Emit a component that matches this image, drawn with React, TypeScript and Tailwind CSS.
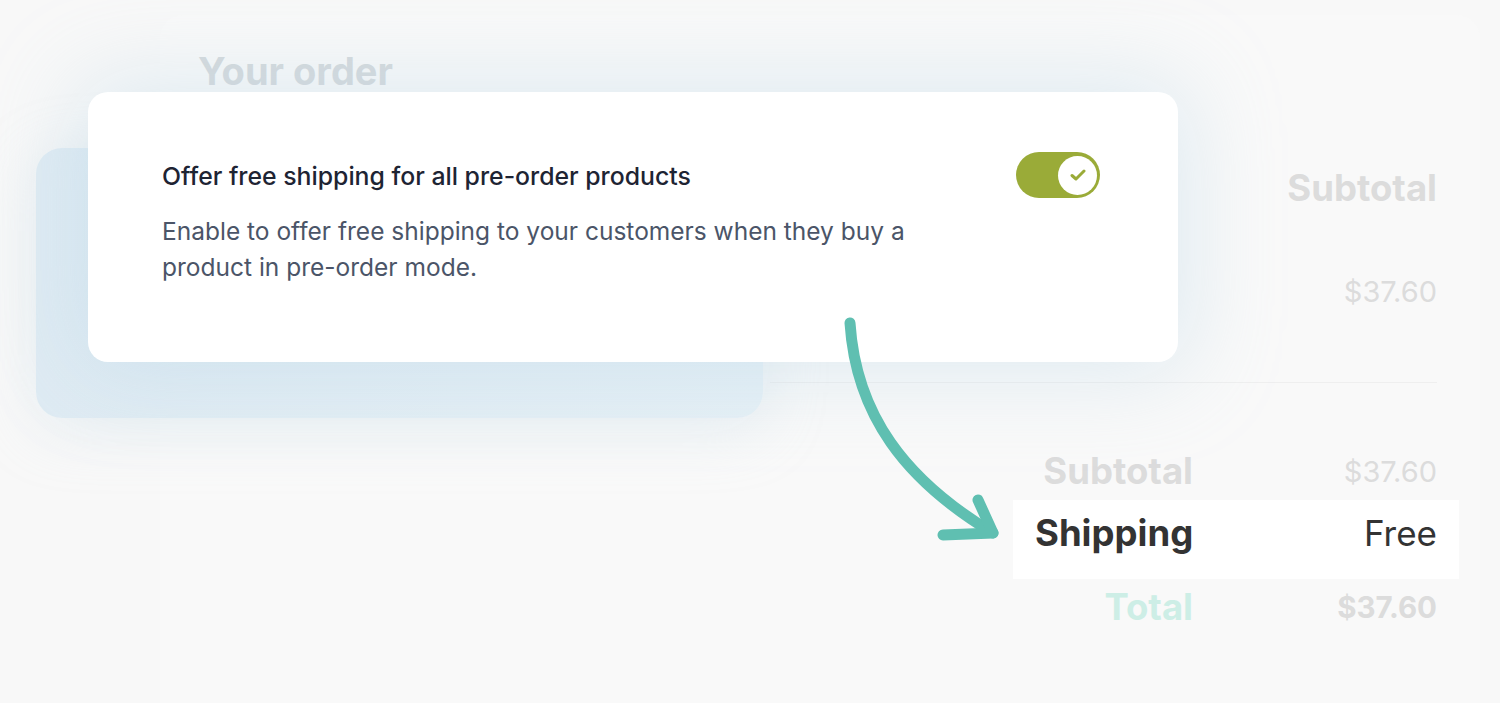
import React from "react";

function Toggle() {
  return (
    <div className="flex h-[46px] w-[84px] shrink-0 items-center justify-end rounded-full bg-[#9aab38] pr-[3px]">
      <div className="flex h-[39px] w-[39px] items-center justify-center rounded-full bg-white">
        <svg width="16" height="12" viewBox="0 0 16 12" fill="none">
          <path d="M2 6.5 L6 10 L14 2" stroke="#9aab38" strokeWidth="3" strokeLinecap="round" strokeLinejoin="round" />
        </svg>
      </div>
    </div>
  );
}

function Row({ label, value, labelClass, valueClass, boxed }: { label: string; value: string; labelClass: string; valueClass: string; boxed?: boolean }) {
  return (
    <div className={`flex items-center px-[22px] ${boxed ? "h-[79px] bg-white pb-[12px]" : "h-[57px]"}`}>
      <span className={`w-[158px] whitespace-nowrap text-right ${labelClass}`}>{label}</span>
      <span className={`flex-1 whitespace-nowrap text-right ${valueClass}`}>{value}</span>
    </div>
  );
}

export default function App() {
  return (
    <div className="relative h-[703px] w-[1500px] overflow-hidden bg-[#f8f8f8] font-[Inter,sans-serif]">
      {/* faint order page behind */}
      <div className="absolute left-[160px] top-[15px] h-[720px] w-[1320px] rounded-[24px] bg-[#f9f9f9]" />

      <div className="absolute inset-0 flex flex-col px-[63px] pt-[50px]">
        <h2 className="ml-[135px] text-[38px] font-bold leading-[42px] text-[#d5d9dc]">Your order</h2>
        <div className="mt-[75px] flex flex-col items-end">
          <span className="text-[36.5px] font-bold leading-[42px] text-[#dcdcdc]">Subtotal</span>
          <span className="mt-[62px] text-[29px] leading-[42px] text-[#dcdcdc]">$37.60</span>
        </div>
        <div className="ml-[707px] mt-[69px] h-px bg-[#efefef]" />
        <div className="-mr-[22px] ml-auto mt-[60px] w-[446px]">
          <Row label="Subtotal" value="$37.60" labelClass="text-[36.5px] font-bold text-[#dcdcdc]" valueClass="text-[29px] text-[#dcdcdc]" />
          <Row boxed label="Shipping" value="Free" labelClass="text-[36.5px] font-bold text-[#333333]" valueClass="text-[35px] text-[#333333]" />
          <Row label="Total" value="$37.60" labelClass="text-[36.5px] font-bold text-[#cdeee6]" valueClass="text-[29.5px] font-bold text-[#dcdcdc]" />
        </div>
      </div>

      {/* blue card behind the settings card */}
      <div className="absolute left-[36px] top-[148px] h-[270px] w-[727px] rounded-[26px] bg-gradient-to-r from-[#dfebf3] to-[#e6f0f6] shadow-[0_10px_60px_rgba(200,220,232,0.35)]" />

      {/* settings card */}
      <div className="absolute left-[88px] top-[92px] flex h-[270px] w-[1090px] items-start justify-between rounded-[20px] bg-white pl-[74px] pr-[78px] pt-[60px] shadow-[0_0_90px_10px_rgba(180,210,228,0.38)]">
        <div className="pt-[10px]">
          <p className="text-[24.8px] font-medium leading-[28px] text-[#1e2433]">Offer free shipping for all pre-order products</p>
          <p className="mt-[23px] w-[760px] text-[24.5px] leading-[36px] text-[#4b5568]">
            Enable to offer free shipping to your customers when they buy a product in pre-order mode.
          </p>
        </div>
        <Toggle />
      </div>

      {/* arrow */}
      <svg className="absolute left-0 top-0" width="1500" height="703" viewBox="0 0 1500 703" fill="none">
        <path d="M850 323 C 856 415, 905 480, 993 533" stroke="#5fbfb1" strokeWidth="11" strokeLinecap="round" />
        <path d="M943 535 L993 533 L978 500" stroke="#5fbfb1" strokeWidth="11" strokeLinecap="round" strokeLinejoin="round" />
      </svg>
    </div>
  );
}
